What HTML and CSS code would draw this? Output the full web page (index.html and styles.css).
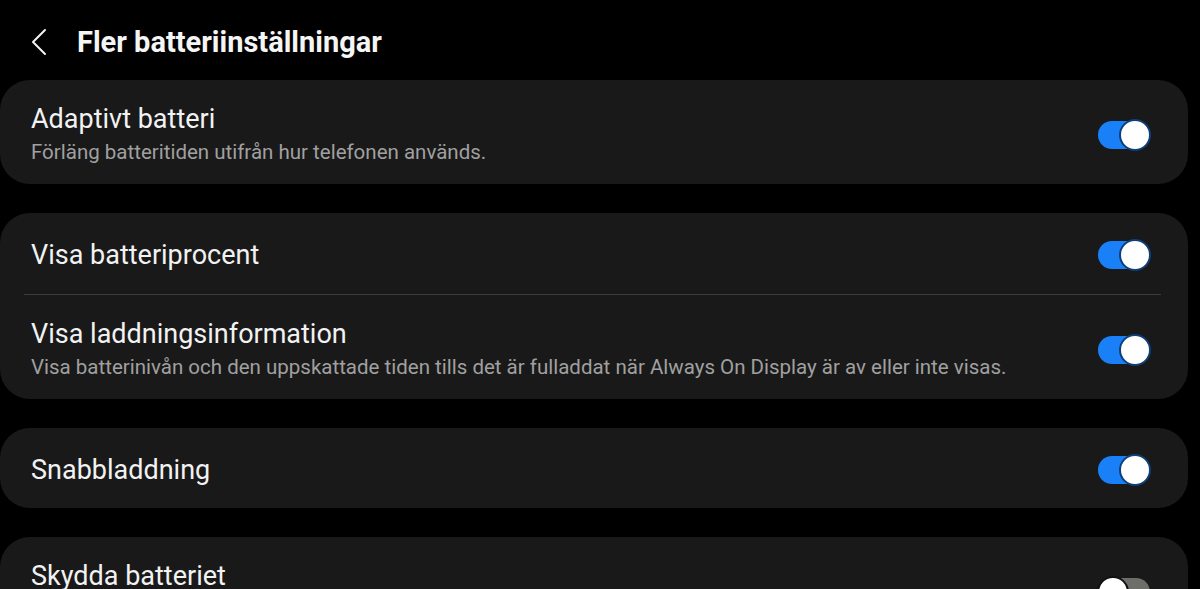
FILE: index.html
```html
<!DOCTYPE html>
<html lang="sv">
<head>
    <meta charset="UTF-8">
    <meta name="viewport" content="width=device-width, initial-scale=1.0">
    <title>Fler batteriinställningar</title>
    <link rel="stylesheet" href="styles.css">
</head>
<body>

<div class="header">
    <button class="back-button" aria-label="Tillbaka">
        <svg width="16" height="28" viewBox="0 0 16 28">
            <polyline points="14,2 2,14 14,26" fill="none" stroke="#f2f2f2" stroke-width="2" stroke-linecap="round" stroke-linejoin="round"/>
        </svg>
    </button>
    <h1>Fler batteriinställningar</h1>
</div>

<div class="settings">
    <!-- Adaptivt batteri -->
    <div class="card">
        <div class="row">
            <div class="text">
                <div class="title">Adaptivt batteri</div>
                <div class="summary">Förläng batteritiden utifrån hur telefonen används.</div>
            </div>
            <span class="switch on"><span class="knob"></span></span>
        </div>
    </div>

    <!-- Visa batteriprocent / laddningsinformation -->
    <div class="card">
        <div class="row single">
            <div class="text">
                <div class="title">Visa batteriprocent</div>
            </div>
            <span class="switch on"><span class="knob"></span></span>
        </div>
        <div class="divider"></div>
        <div class="row">
            <div class="text">
                <div class="title">Visa laddningsinformation</div>
                <div class="summary">Visa batterinivån och den uppskattade tiden tills det är fulladdat när Always On Display är av eller inte visas.</div>
            </div>
            <span class="switch on"><span class="knob"></span></span>
        </div>
    </div>

    <!-- Snabbladdning -->
    <div class="card">
        <div class="row single">
            <div class="text">
                <div class="title">Snabbladdning</div>
            </div>
            <span class="switch on"><span class="knob"></span></span>
        </div>
    </div>

    <!-- Skydda batteriet -->
    <div class="card">
        <div class="row">
            <div class="text">
                <div class="title">Skydda batteriet</div>
                <div class="summary">Begränsa maximal laddning till 85 % för att förlänga batteriets livslängd.</div>
            </div>
            <span class="switch"><span class="knob"></span></span>
        </div>
    </div>
</div>

</body>
</html>
```

FILE: styles.css
```css
body {
    font-family: Roboto, "Noto Sans", Arial, sans-serif;
    margin: 0;
    padding: 0;
    background-color: #000;
    color: #f2f2f2;
    height: 589px;
    overflow: hidden;
}
.header {
    height: 80px;
    box-sizing: border-box;
    padding: 4px 0 0 31px;
    display: flex;
    align-items: center;
}
.back-button {
    background: none;
    border: none;
    padding: 0;
    width: 46px;
    height: 28px;
    display: flex;
    align-items: center;
    cursor: pointer;
}
.header h1 {
    margin: 0;
    font-size: 29px;
    font-weight: 700;
    color: #f5f5f5;
}
.settings {
    display: flex;
    flex-direction: column;
    gap: 29px;
    width: 1188px;
}
.card {
    background-color: #191919;
    border-radius: 30px;
}
.row {
    display: flex;
    align-items: center;
    justify-content: space-between;
    padding: 24px 38px 19px 31px;
}
.row.single {
    padding-top: 27px;
    padding-bottom: 23px;
}
.text {
    flex: 1;
}
.title {
    font-size: 27px;
    line-height: 30px;
    color: #f2f2f2;
}
.summary {
    margin-top: 6px;
    font-size: 20.5px;
    line-height: 25px;
    color: #a0a0a0;
    white-space: nowrap;
}
.divider {
    height: 1px;
    background-color: #3a3a3a;
    margin: 1px 27px 0 24px;
}
.switch {
    position: relative;
    width: 52px;
    height: 28px;
    border-radius: 14px;
    background-color: #6d6d69;
    margin-left: 20px;
    flex-shrink: 0;
}
.switch.on {
    background-color: #1a80f7;
}
.knob {
    position: absolute;
    top: -2px;
    left: -1px;
    width: 28px;
    height: 28px;
    border-radius: 50%;
    background-color: #fff;
    border: 2px solid #111;
}
.switch.on .knob {
    left: auto;
    right: -1px;
    border-color: #0d3f7a;
}
```
